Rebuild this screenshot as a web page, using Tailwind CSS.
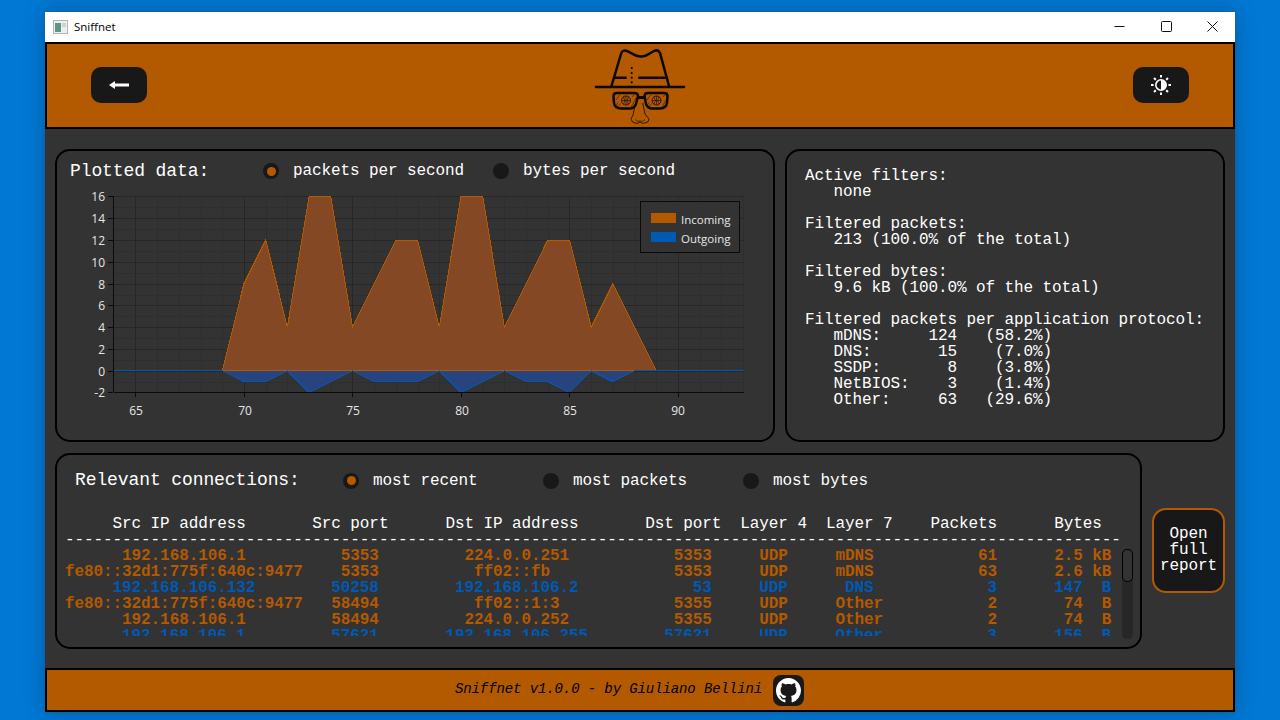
<!DOCTYPE html>
<html lang="en">
<head>
  <meta charset="UTF-8" />
  <title>Sniffnet</title>
  <script src="https://cdn.jsdelivr.net/npm/@tailwindcss/browser@4"></script>
</head>
<body class="h-screen overflow-hidden bg-[#0078d4] pt-[12px] px-[45px] font-['Liberation_Mono',monospace]">
  <div class="h-[700px] flex flex-col bg-[#333333] text-white shadow-[0_0_0_1px_#33557f66,0_0_20px_#00000040]">

    <!-- title bar -->
    <div class="h-[30px] shrink-0 bg-white flex items-center text-black font-['Open_Sans','Noto_Sans',sans-serif] text-[11.5px]">
      <svg class="ml-[8px] mr-[6px]" width="15" height="14" viewBox="0 0 15 14">
        <rect x="0.5" y="0.5" width="14" height="13" fill="#eeeeee" stroke="#b5b5b5" />
        <rect x="2" y="3" width="6" height="9" fill="#5f9488" />
        <rect x="9" y="3" width="4" height="4" fill="#c9d3d6" />
      </svg>
      <span>Sniffnet</span>
      <div class="ml-auto flex">
        <div class="w-[46px] h-[30px] pb-[2px] pr-[2px] flex items-center justify-center">
          <svg width="11" height="11" viewBox="0 0 11 11"><path d="M0.5 5.5h10" stroke="#111" fill="none" /></svg>
        </div>
        <div class="w-[46px] h-[30px] pb-[2px] flex items-center justify-center">
          <svg width="11" height="11" viewBox="0 0 11 11"><rect x="0.5" y="0.5" width="10" height="10" rx="1" stroke="#111" fill="none" /></svg>
        </div>
        <div class="w-[46px] h-[30px] pb-[2px] flex items-center justify-center">
          <svg width="11" height="11" viewBox="0 0 11 11"><path d="M0.5 0.5l10 10M10.5 0.5l-10 10" stroke="#111" fill="none" /></svg>
        </div>
      </div>
    </div>

    <!-- header -->
    <div class="h-[87px] shrink-0 bg-[#b35900] border-2 border-black flex items-center justify-between pl-[44px] pr-[44px] pb-[1px]">
      <button class="w-[56px] h-[36px] bg-[#181818] rounded-[10px] flex items-center justify-center">
        <svg width="20" height="8" viewBox="0 0 20 8">
          <path d="M20 2.500H6V0L0 4l6 4V5.500h14z" fill="#fff" />
        </svg>
      </button>
      <svg width="140" height="90" viewBox="0 0 140 90" fill="none" stroke="#0c0700">
        <path d="M26 47H114" stroke-width="2.5" stroke-linecap="round" />
        <path d="M41.500 46L51 14Q52.500 9 57 11L66 15.500Q71 17.500 76 15.500L84 11Q88 9 90 13L99 46" stroke-width="2.5" />
        <path d="M44 37.700H56.700M68.300 37.700H95.700" stroke-width="2.5" />
        <path d="M61.700 28v.01M61.700 33v.01M61.700 37.700v.01M61.700 42.300v.01" stroke-width="2.200" stroke-linecap="round" />
        <path d="M43.500 56Q43.500 53 47 53H64Q68 53 68 56L66 64Q64 68.500 60 68.500H51Q45 68.500 44 63zM97.500 56Q97.500 53 94 53H78Q74.500 53 74.500 56L76 64Q78 68.500 82 68.500H90Q96 68.500 97 63z" stroke-width="2.500" />
        <path d="M68 57.500H74.500" stroke-width="3" />
        <circle cx="56" cy="60.500" r="4.500" stroke-width="0.800" />
        <circle cx="86.500" cy="60.500" r="4.500" stroke-width="0.800" />
        <path d="M51.500 60.500H60.500M56 56V65M53.500 56.500Q56 60.500 53.500 64.500M58.500 56.500Q56 60.500 58.500 64.500M82 60.500H91M86.500 56V65M84 56.500Q86.500 60.500 84 64.500M89 56.500Q86.500 60.500 89 64.500" stroke-width="0.600" />
        <path d="M46 60L50 54.500M46.500 65L48 62.500M48 67L50.500 63.500M61 67L66 58M62 57L64 54.500M77 60L81 54.500M77.500 65L79 62.500M79 67L81.500 63.500M92 67L96 60M93 57L95 54.500" stroke-width="0.500" />
        <path d="M65.700 62L63 75L61 79Q62 83 65 83Q68 84 70 82Q72 84 75 83Q79 82.500 79 79L75 74L72.700 63" stroke-width="0.800" />
        <path d="M65.500 79.500Q68 82.500 70 81M75 79.500Q72.500 82.500 70 81" stroke-width="0.600" />
      </svg>
      <button class="w-[56px] h-[36px] bg-[#181818] rounded-[10px] flex items-center justify-center">
        <svg width="20" height="20" viewBox="0 0 20 20" fill="none" stroke="#fff">
          <circle cx="10" cy="10" r="5.200" stroke-width="1.600" />
          <path d="M10 4.800a5.200 5.200 0 0 1 0 10.400z" fill="#fff" stroke="none" />
          <path d="M10 0v2.600M10 17.400V20M0 10h2.600M17.400 10H20M3 3l1.800 1.800M15.200 15.200L17 17M17 3l-1.800 1.800M4.800 15.200L3 17" stroke-width="2" />
        </svg>
      </button>
    </div>

    <!-- body -->
    <div class="flex-1 flex flex-col gap-[11px] pt-[20px] px-[10px]">
      <div class="flex gap-[10px]">

        <!-- chart panel -->
        <div class="w-[720px] h-[293px] border-2 border-black rounded-[15px] flex flex-col">
          <div class="h-[40px] shrink-0 flex items-center whitespace-pre tracking-[-0.1px]">
            <span class="ml-[13px] w-[193px] text-[18px]">Plotted data:</span>
            <span class="w-[16px] h-[16px] rounded-full bg-[#181818] flex items-center justify-center"><span class="w-[9px] h-[9px] rounded-full bg-[#b35900]"></span></span>
            <span class="ml-[14px] w-[200px] text-[16px]">packets per second</span>
            <span class="w-[16px] h-[16px] rounded-full bg-[#181818]"></span>
            <span class="ml-[14px] text-[16px]">bytes per second</span>
          </div>
          <svg class="block overflow-visible" width="716" height="229" viewBox="57 191 716 229" font-family="'Open Sans','Noto Sans',sans-serif" font-size="12" fill="#e6e6e6">
            <!-- minor grid -->
            <path stroke="#2e2e2e" fill="none" shape-rendering="crispEdges" d="M157.500 196V392M179 196V392M201 196V392M222 196V392M266 196V392M287 196V392M309 196V392M331 196V392M374 196V392M396 196V392M418 196V392M439 196V392M483 196V392M504 196V392M526 196V392M548 196V392M591 196V392M613 196V392M635 196V392M656 196V392M700 196V392M721 196V392M743 196V392M114 207H744M114 229H744M114 251H744M114 273H744M114 295H744M114 316H744M114 338H744M114 360H744M114 382H744" />
            <!-- major grid -->
            <path stroke="#272727" fill="none" shape-rendering="crispEdges" d="M135 196V392M244 196V392M352 196V392M461 196V392M569 196V392M678 196V392M114 196H744M114 218H744M114 240H744M114 262H744M114 284H744M114 305H744M114 327H744M114 349H744M114 371H744" />
            <!-- incoming -->
            <path fill="#854824" stroke="#b35900" shape-rendering="crispEdges" d="M222.300 370.800L244 283.600L265.700 240L287.400 327.200L309.100 196.400L330.800 196.400L352.500 327.200L374.200 283.600L395.900 240L417.600 240L439.300 327.200L461 196.400L482.700 196.400L504.400 327.200L526.100 283.600L547.800 240L569.500 240L591.200 327.200L612.900 283.600L634.600 327.200L656.300 370.800Z" />
            <!-- outgoing -->
            <path fill="#274480" stroke="none" shape-rendering="crispEdges" d="M222.300 370.800L244 381.700L265.700 381.700L287.400 370.800L309.100 392.600L330.800 381.700L352.500 370.800L374.200 381.700L395.900 381.700L417.600 381.700L439.300 370.800L461 392.600L482.700 381.700L504.400 370.800L526.100 381.700L547.800 381.700L569.500 392.600L591.200 370.800L612.900 381.700L634.600 370.800Z" />
            <path fill="none" stroke="#0059b3" shape-rendering="crispEdges" d="M114 370.800H222.300L244 381.700L265.700 381.700L287.400 370.800L309.100 392.600L330.800 381.700L352.500 370.800L374.200 381.700L395.900 381.700L417.600 381.700L439.300 370.800L461 392.600L482.700 381.700L504.400 370.800L526.100 381.700L547.800 381.700L569.500 392.600L591.200 370.800L612.900 381.700L634.600 370.800L656.300 370.800H744" />
            <!-- axes -->
            <path stroke="#0a0a0a" fill="none" shape-rendering="crispEdges" d="M113 196V392M114 392H744M108 196H113M108 218H113M108 240H113M108 262H113M108 284H113M108 305H113M108 327H113M108 349H113M108 371H113M108 392H113M135 392V397M244 392V397M352 392V397M461 392V397M569 392V397M678 392V397" />
            <g text-anchor="end">
              <text x="105" y="201">16</text><text x="105" y="223">14</text><text x="105" y="245">12</text><text x="105" y="267">10</text><text x="105" y="289">8</text><text x="105" y="310">6</text><text x="105" y="332">4</text><text x="105" y="354">2</text><text x="105" y="376">0</text><text x="105" y="397">-2</text>
            </g>
            <g text-anchor="middle">
              <text x="136" y="415">65</text><text x="245" y="415">70</text><text x="353" y="415">75</text><text x="462" y="415">80</text><text x="570" y="415">85</text><text x="678" y="415">90</text>
            </g>
            <!-- legend -->
            <rect x="640.500" y="201.500" width="99" height="51" fill="#333333" stroke="#0a0a0a" shape-rendering="crispEdges" />
            <rect x="651" y="213" width="25" height="10" fill="#b35900" />
            <rect x="651" y="232" width="25" height="10" fill="#0059b3" />
            <text x="681" y="224" font-size="11.500">Incoming</text>
            <text x="681" y="243" font-size="11.500">Outgoing</text>
          </svg>
        </div>

        <!-- filters panel -->
        <div class="w-[440px] h-[293px] border-2 border-black rounded-[15px] pl-[18px] pt-[17px]">
          <pre class="font-['Liberation_Mono',monospace] text-[16px] leading-[16px] tracking-[-0.1px]">Active filters:
   none

Filtered packets:
   213 (100.0% of the total)

Filtered bytes:
   9.6 kB (100.0% of the total)

Filtered packets per application protocol:
   mDNS:     124   (58.2%)
   DNS:       15    (7.0%)
   SSDP:       8    (3.8%)
   NetBIOS:    3    (1.4%)
   Other:     63   (29.6%)</pre>
        </div>
      </div>

      <div class="flex items-end gap-[10px]">
        <!-- connections panel -->
        <div class="relative w-[1087px] h-[196px] border-2 border-black rounded-[15px] flex flex-col">
          <div class="h-[51px] shrink-0 flex items-center whitespace-pre tracking-[-0.1px]">
            <span class="ml-[18px] w-[268px] text-[18px]">Relevant connections:</span>
            <span class="w-[16px] h-[16px] rounded-full bg-[#181818] flex items-center justify-center"><span class="w-[9px] h-[9px] rounded-full bg-[#b35900]"></span></span>
            <span class="ml-[14px] w-[170px] text-[16px]">most recent</span>
            <span class="w-[16px] h-[16px] rounded-full bg-[#181818]"></span>
            <span class="ml-[14px] w-[170px] text-[16px]">most packets</span>
            <span class="w-[16px] h-[16px] rounded-full bg-[#181818]"></span>
            <span class="ml-[14px] text-[16px]">most bytes</span>
          </div>
          <div class="pl-[8px] pt-[10px]">
            <pre class="font-['Liberation_Mono',monospace] text-[16px] leading-[16px] tracking-[-0.09px]">     Src IP address       Src port      Dst IP address       Dst port  Layer 4  Layer 7    Packets      Bytes
---------------------------------------------------------------------------------------------------------------</pre>
            <div class="h-[88px] overflow-hidden">
              <pre class="font-['Liberation_Mono',monospace] font-bold text-[16px] leading-[16px] tracking-[-0.09px] text-[#b35900]">      192.168.106.1          5353         224.0.0.251           5353     UDP     mDNS           61      2.5 kB
fe80::32d1:775f:640c:9477    5353          ff02::fb             5353     UDP     mDNS           63      2.6 kB
<span class="text-[#0059b3]">     192.168.106.132        50258        192.168.106.2            53     UDP      DNS            3      147  B</span>
fe80::32d1:775f:640c:9477   58494          ff02::1:3            5355     UDP     Other           2       74  B
      192.168.106.1         58494         224.0.0.252           5355     UDP     Other           2       74  B
<span class="text-[#0059b3]">      192.168.106.1         57621       192.168.106.255        57621     UDP     Other           3      156  B</span></pre>
            </div>
          </div>
          <!-- scrollbar -->
          <div class="absolute left-[1065px] top-[94px] w-[11px] h-[90px] rounded-[5px] bg-[#272727]">
            <div class="h-[33px] rounded-[5px] border-[1.5px] border-black bg-[#333333]"></div>
          </div>
        </div>

        <button class="w-[73px] h-[85px] mb-[56px] pb-[1px] bg-[#181818] border-2 border-[#b35900] rounded-[14px] text-[16px] leading-[16px] tracking-[-0.1px] text-center">Open<br />full<br />report</button>
      </div>
    </div>

    <!-- footer -->
    <div class="h-[44px] shrink-0 bg-[#b35900] border-2 border-black flex items-center justify-center gap-[11px] pr-[21px] text-black">
      <span class="italic text-[14px] tracking-[-0.1px] pb-[2px]">Sniffnet v1.0.0 - by Giuliano Bellini</span>
      <span class="w-[31px] h-[31px] bg-[#181818] rounded-[8px] flex items-center justify-center">
        <svg width="25" height="25" viewBox="0 0 16 16" fill="#fff"><path d="M8 0C3.58 0 0 3.58 0 8c0 3.54 2.29 6.53 5.47 7.59.4.07.55-.17.55-.38 0-.19-.01-.82-.01-1.49-2.01.37-2.53-.49-2.69-.94-.09-.23-.48-.94-.82-1.13-.28-.15-.68-.52-.01-.53.63-.01 1.08.58 1.23.82.72 1.21 1.87.87 2.33.66.07-.52.28-.87.51-1.07-1.78-.2-3.64-.89-3.64-3.95 0-.87.31-1.59.82-2.15-.08-.2-.36-1.02.08-2.12 0 0 .67-.21 2.2.82.64-.18 1.32-.27 2-.27.68 0 1.36.09 2 .27 1.53-1.04 2.2-.82 2.2-.82.44 1.1.16 1.92.08 2.12.51.56.82 1.27.82 2.15 0 3.07-1.87 3.75-3.65 3.95.29.25.54.73.54 1.48 0 1.07-.01 1.93-.01 2.2 0 .21.15.46.55.38A8.013 8.013 0 0016 8c0-4.42-3.58-8-8-8z" /></svg>
      </span>
    </div>
  </div>
</body>
</html>
